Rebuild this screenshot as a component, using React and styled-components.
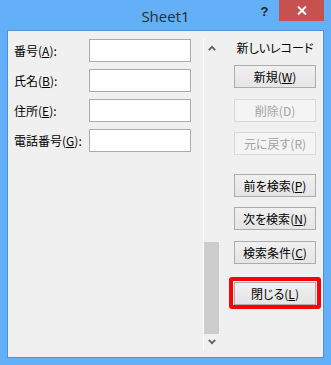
import React from "react";
import styled, { createGlobalStyle } from "styled-components";

const GlobalStyle = createGlobalStyle`
  html, body {
    margin: 0;
    padding: 0;
    background: #ffffff;
  }
  body {
    font-family: "Noto Sans CJK JP", "Noto Sans", sans-serif;
  }
`;

const fields = [
  { label: "番号", key: "A" },
  { label: "氏名", key: "B" },
  { label: "住所", key: "E" },
  { label: "電話番号", key: "G" },
];

const buttons = [
  { label: "新規", key: "W" },
  { label: "削除", key: "D", disabled: true },
  { label: "元に戻す", key: "R", disabled: true },
  { label: "前を検索", key: "P", group: true },
  { label: "次を検索", key: "N" },
  { label: "検索条件", key: "C" },
  { label: "閉じる", key: "L", group: true, marked: true },
];

const App = () => {
  return (
    <>
      <GlobalStyle />
      <Window>
        <TitleBar>
          <span />
          <Title>Sheet1</Title>
          <Controls>
            <HelpButton>?</HelpButton>
            <CloseButton>
              <svg width="10" height="9" viewBox="0 0 10 9">
                <path d="M1 0.5 L9 8.5 M9 0.5 L1 8.5" stroke="#fff" strokeWidth="2" />
              </svg>
            </CloseButton>
          </Controls>
        </TitleBar>
        <Client>
          <Form>
            {fields.map((f) => (
              <React.Fragment key={f.key}>
                <Label>
                  {f.label}(<U>{f.key}</U>):
                </Label>
                <TextBox />
              </React.Fragment>
            ))}
          </Form>
          <ScrollBar>
            <Arrow>
              <svg width="8" height="6" viewBox="0 0 8 6">
                <polyline points="0.8,5.2 4,1.8 7.2,5.2" fill="none" stroke="#606060" strokeWidth="1.8" />
              </svg>
            </Arrow>
            <Track>
              <Thumb />
            </Track>
            <Arrow $down>
              <svg width="8" height="6" viewBox="0 0 8 6">
                <polyline points="0.8,0.8 4,4.2 7.2,0.8" fill="none" stroke="#606060" strokeWidth="1.8" />
              </svg>
            </Arrow>
          </ScrollBar>
          <Panel>
            <PanelLabel>新しいレコード</PanelLabel>
            <ButtonList>
              {buttons.map((b) => (
                <Button key={b.key} disabled={b.disabled} $group={b.group}>
                  {b.label}({b.disabled ? b.key : <U>{b.key}</U>})
                  {b.marked && <Highlight />}
                </Button>
              ))}
            </ButtonList>
          </Panel>
        </Client>
      </Window>
    </>
  );
};
export default App;

const Window = styled.div`
  width: 331px;
  height: 365px;
  box-sizing: border-box;
  background: #63b0f8;
  display: flex;
  flex-direction: column;
`;

const TitleBar = styled.div`
  height: 30px;
  display: grid;
  grid-template-columns: 1fr auto 1fr;
  align-items: start;
`;

const Title = styled.div`
  margin-top: 6px;
  font-family: "Open Sans", "Noto Sans", sans-serif;
  font-size: 15px;
  line-height: 20px;
  color: #2d2d2d;
`;

const Controls = styled.div`
  display: flex;
  justify-content: flex-end;
  margin-right: 7px;
`;

const HelpButton = styled.div`
  width: 29px;
  height: 21px;
  display: flex;
  justify-content: center;
  padding-top: 4px;
  box-sizing: border-box;
  font-family: "Liberation Sans", sans-serif;
  font-weight: bold;
  font-size: 13px;
  line-height: 15px;
  color: #222;
`;

const CloseButton = styled.div`
  width: 45px;
  height: 21px;
  background: #c75050;
  display: flex;
  align-items: center;
  justify-content: center;
`;

const Client = styled.div`
  flex: 1;
  margin: 0 7px 7px;
  border: 1px solid #4d92d8;
  background: #f0f0f0;
  display: flex;
  font-feature-settings: "palt";
`;

const Form = styled.div`
  width: 195px;
  box-sizing: border-box;
  padding: 8px 0 0 6px;
  display: grid;
  grid-template-columns: 75px 102px;
  grid-auto-rows: 23px;
  row-gap: 7px;
  align-items: center;
  align-content: start;
`;

const Label = styled.div`
  font-size: 12px;
  line-height: 16px;
  color: #000;
  white-space: nowrap;
`;

const U = styled.span`
  text-decoration: underline;
  text-underline-offset: 1px;
`;

const TextBox = styled.div`
  height: 23px;
  box-sizing: border-box;
  background: #fff;
  border: 1px solid #ababab;
`;

const ScrollBar = styled.div`
  width: 17px;
  box-sizing: border-box;
  margin: 8px 0 7px;
  border-left: 1px solid #ffffff;
  display: flex;
  flex-direction: column;
`;

const Arrow = styled.div`
  height: ${(p) => (p.$down ? "16px" : "17px")};
  display: flex;
  align-items: center;
  justify-content: center;
  padding-right: 1px;
`;

const Track = styled.div`
  flex: 1;
  display: flex;
  flex-direction: column;
  justify-content: flex-end;
`;

const Thumb = styled.div`
  width: 15px;
  height: 92px;
  background: #cdcdcd;
`;

const Panel = styled.div`
  flex: 1;
  padding: 9px 7px 0 14px;
  display: flex;
  flex-direction: column;
`;

const PanelLabel = styled.div`
  font-size: 12px;
  line-height: 16px;
  text-align: center;
  white-space: nowrap;
  color: #000;
`;

const ButtonList = styled.div`
  margin-top: 9px;
  display: flex;
  flex-direction: column;
  gap: 10.5px;
`;

const Button = styled.button`
  position: relative;
  height: 23px;
  margin-top: ${(p) => (p.$group ? "8px" : "0")};
  padding: 0;
  box-sizing: border-box;
  border: 1px solid #acacac;
  background: linear-gradient(#f0f0f0, #e5e5e5);
  font-family: "Noto Sans CJK JP", "Noto Sans", sans-serif;
  font-feature-settings: "palt";
  font-size: 12px;
  line-height: 21px;
  color: #000;
  &:disabled {
    border-color: #d9d9d9;
    background: #f4f4f4;
    color: #a3a3a3;
  }
`;

const Highlight = styled.span`
  position: absolute;
  left: -6px;
  right: -6px;
  top: -6px;
  bottom: -5px;
  border: 4px solid #ff0000;
  border-radius: 3px;
  pointer-events: none;
`;
